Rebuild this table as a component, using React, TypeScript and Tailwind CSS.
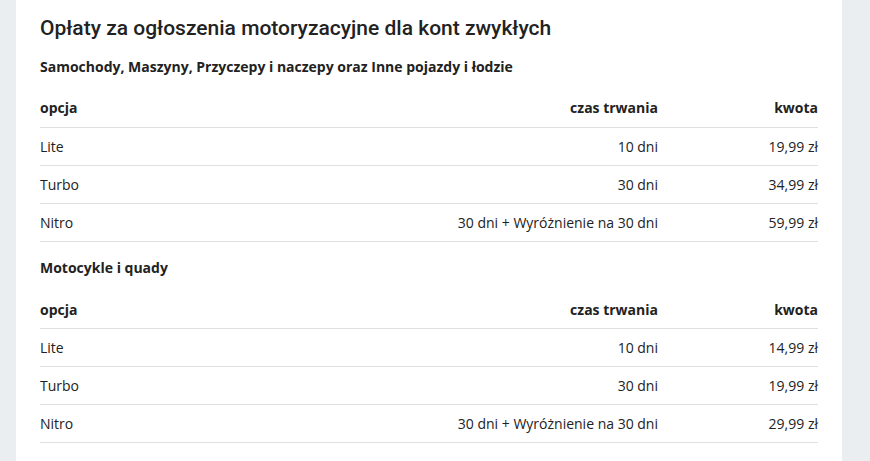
import React from "react";

type Row = { o: string; c: string; k: string };

const Table = ({ rows }: { rows: Row[] }) => (
  <table className="w-full border-collapse text-[14px] text-[#222]">
    <thead>
      <tr className="border-b border-[#e0e0e0]">
        <th className="h-[38px] p-0 text-left font-bold">opcja</th>
        <th className="h-[38px] p-0 text-right font-bold">czas trwania</th>
        <th className="h-[38px] w-[160px] p-0 text-right font-bold">kwota</th>
      </tr>
    </thead>
    <tbody>
      {rows.map((r) => (
        <tr key={r.o} className="border-b border-[#e0e0e0]">
          <td className="h-[38px] p-0 text-left">{r.o}</td>
          <td className="h-[38px] p-0 text-right">{r.c}</td>
          <td className="h-[38px] w-[160px] p-0 text-right">{r.k}</td>
        </tr>
      ))}
    </tbody>
  </table>
);

export default function App() {
  const a: Row[] = [
    { o: "Lite", c: "10 dni", k: "19,99 zł" },
    { o: "Turbo", c: "30 dni", k: "34,99 zł" },
    { o: "Nitro", c: "30 dni + Wyróżnienie na 30 dni", k: "59,99 zł" },
  ];
  const b: Row[] = [
    { o: "Lite", c: "10 dni", k: "14,99 zł" },
    { o: "Turbo", c: "30 dni", k: "19,99 zł" },
    { o: "Nitro", c: "30 dni + Wyróżnienie na 30 dni", k: "29,99 zł" },
  ];
  return (
    <div className="h-[461px] w-[870px] overflow-hidden bg-[#ebeef1] font-['Open_Sans',sans-serif] text-[#222]">
      <div className="ml-[16px] h-full w-[826px] bg-white px-[24px] pt-[14px]">
        <h1 className="h-[28px] font-['Roboto',sans-serif] text-[21px] leading-[28px] font-medium text-[#222]">
          Opłaty za ogłoszenia motoryzacyjne dla kont zwykłych
        </h1>
        <h2 className="mt-[15px] mb-[12px] text-[14px] leading-[20px] font-bold">
          Samochody, Maszyny, Przyczepy i naczepy oraz Inne pojazdy i łodzie
        </h2>
        <Table rows={a} />
        <h2 className="mt-[16px] mb-[13px] text-[14px] leading-[20px] font-bold">
          Motocykle i quady
        </h2>
        <Table rows={b} />
      </div>
    </div>
  );
}
